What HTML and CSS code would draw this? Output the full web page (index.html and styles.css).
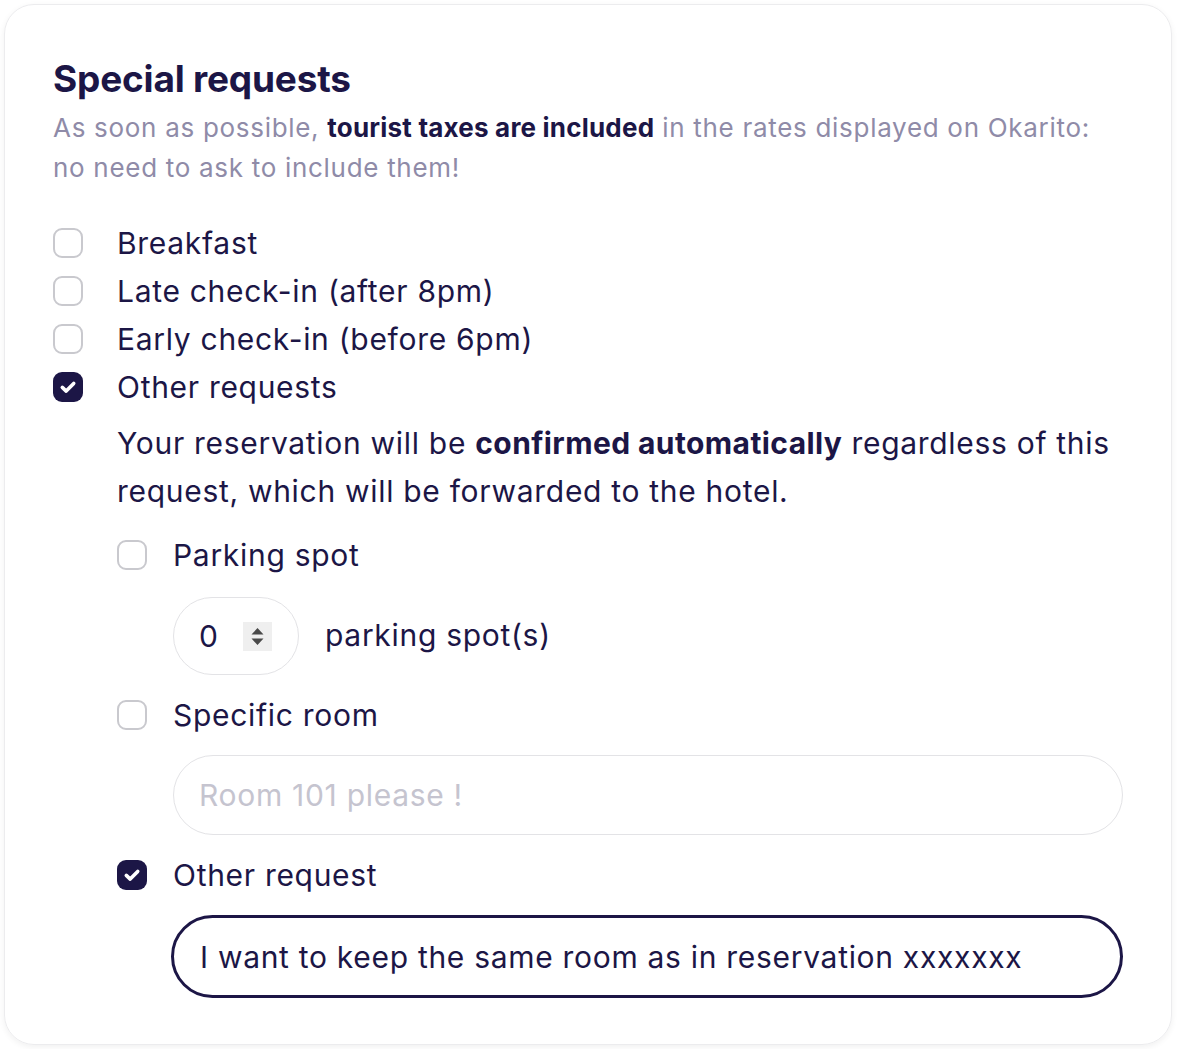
FILE: index.html
```html
<!DOCTYPE html>
<html lang="en">
<head>
<meta charset="UTF-8" />
<title>Special requests</title>
<link rel="stylesheet" href="styles.css">
</head>
<body>

<section class="card">
  <h2>Special requests</h2>
  <p class="hint">As soon as possible, <b>tourist taxes are included</b> in the rates displayed on Okarito: no need to ask to include them!</p>

  <div class="options">
    <label class="check">
      <span class="box"></span>
      <span>Breakfast</span>
    </label>
    <label class="check">
      <span class="box"></span>
      <span>Late check-in (after 8pm)</span>
    </label>
    <label class="check">
      <span class="box"></span>
      <span>Early check-in (before 6pm)</span>
    </label>
    <label class="check">
      <span class="box on">
        <svg viewBox="0 0 30 30" width="30" height="30"><path d="M9.3 15.4l3.9 3.7 7.5-7.7" fill="none" stroke="#fff" stroke-width="3.6" stroke-linecap="round" stroke-linejoin="round"/></svg>
      </span>
      <span>Other requests</span>
    </label>

    <div class="other">
      <p class="note">Your reservation will be <b>confirmed automatically</b> regardless of this request, which will be forwarded to the hotel.</p>

      <label class="check">
        <span class="box"></span>
        <span>Parking spot</span>
      </label>
      <div class="sub">
        <div class="qty">
          <span class="qty-val">0</span>
          <span class="spin">
            <svg viewBox="0 0 29 29" width="29" height="29"><path d="M14.5 6l6 6.5h-12z M14.5 23l6-6.5h-12z" fill="#4a4a4a"/></svg>
          </span>
        </div>
        <span>parking spot(s)</span>
      </div>

      <label class="check">
        <span class="box"></span>
        <span>Specific room</span>
      </label>
      <div class="sub">
        <input class="field" type="text" placeholder="Room 101 please !" />
      </div>

      <label class="check">
        <span class="box on">
          <svg viewBox="0 0 30 30" width="30" height="30"><path d="M9.3 15.4l3.9 3.7 7.5-7.7" fill="none" stroke="#fff" stroke-width="3.6" stroke-linecap="round" stroke-linejoin="round"/></svg>
        </span>
        <span>Other request</span>
      </label>
      <div class="sub">
        <input class="field active" type="text" value="I want to keep the same room as in reservation xxxxxxx" />
      </div>
    </div>
  </div>
</section>

</body>
</html>
```

FILE: styles.css
```css
* {
  box-sizing: border-box;
}
body {
  margin: 0;
  padding: 4px;
  background: #fff;
  font-family: Inter, "Noto Sans", sans-serif;
  color: #1c1646;
}
.card {
  width: 1168px;
  height: 1041px;
  border: 1px solid #ececee;
  border-radius: 30px;
  box-shadow: 0 2px 6px rgba(0, 0, 0, 0.06);
  padding: 50px 48px 48px 48px;
}
h2 {
  margin: 0 0 5px;
  font-size: 37px;
  line-height: 48px;
  font-weight: 700;
  letter-spacing: -0.2px;
}
.hint {
  margin: 0;
  font-size: 26px;
  line-height: 40px;
  letter-spacing: 0.7px;
  color: #8f8ba8;
}
.hint b {
  color: #1c1646;
  font-weight: 700;
  letter-spacing: 0.2px;
}
.options {
  margin-top: 31px;
}
.check {
  display: flex;
  align-items: center;
  gap: 34px;
  height: 48px;
  font-size: 30px;
  letter-spacing: 0.7px;
}
.box {
  width: 30px;
  height: 30px;
  flex: none;
  border: 2px solid #c9c9ce;
  border-radius: 9px;
}
.box.on {
  border: none;
  background: #1c1646;
}
.box svg {
  display: block;
}
.other {
  padding-left: 64px;
  display: flex;
  flex-direction: column;
  gap: 16px;
}
.note {
  margin: 8px 0 0;
  font-size: 30px;
  line-height: 48px;
  letter-spacing: 0.7px;
}
.note b {
  font-weight: 700;
  letter-spacing: 0.4px;
}
.other .check {
  gap: 26px;
}
.sub {
  padding-left: 56px;
  display: flex;
  align-items: center;
  gap: 26px;
  font-size: 30px;
  letter-spacing: 0.7px;
}
.qty {
  width: 126px;
  height: 78px;
  margin-top: 2px;
  border: 1.5px solid #e3e3e6;
  border-radius: 39px;
  display: flex;
  align-items: center;
  padding-left: 25px;
  gap: 24px;
}
.spin {
  width: 29px;
  height: 29px;
  background: #efefef;
}
.spin svg {
  display: block;
}
.field {
  width: 950px;
  height: 80px;
  border: 1.5px solid #e3e3e6;
  border-radius: 40px;
  padding: 0 25px;
  font-family: inherit;
  font-size: 30px;
  letter-spacing: 0.7px;
  color: #1c1646;
  outline: none;
  background: #fff;
}
.field::placeholder {
  color: #c5c4cf;
}
.field.active {
  width: 954px;
  height: 83px;
  margin-left: -2px;
  border: 3px solid #1c1646;
  border-radius: 42px;
  padding: 0 26px;
}
```
